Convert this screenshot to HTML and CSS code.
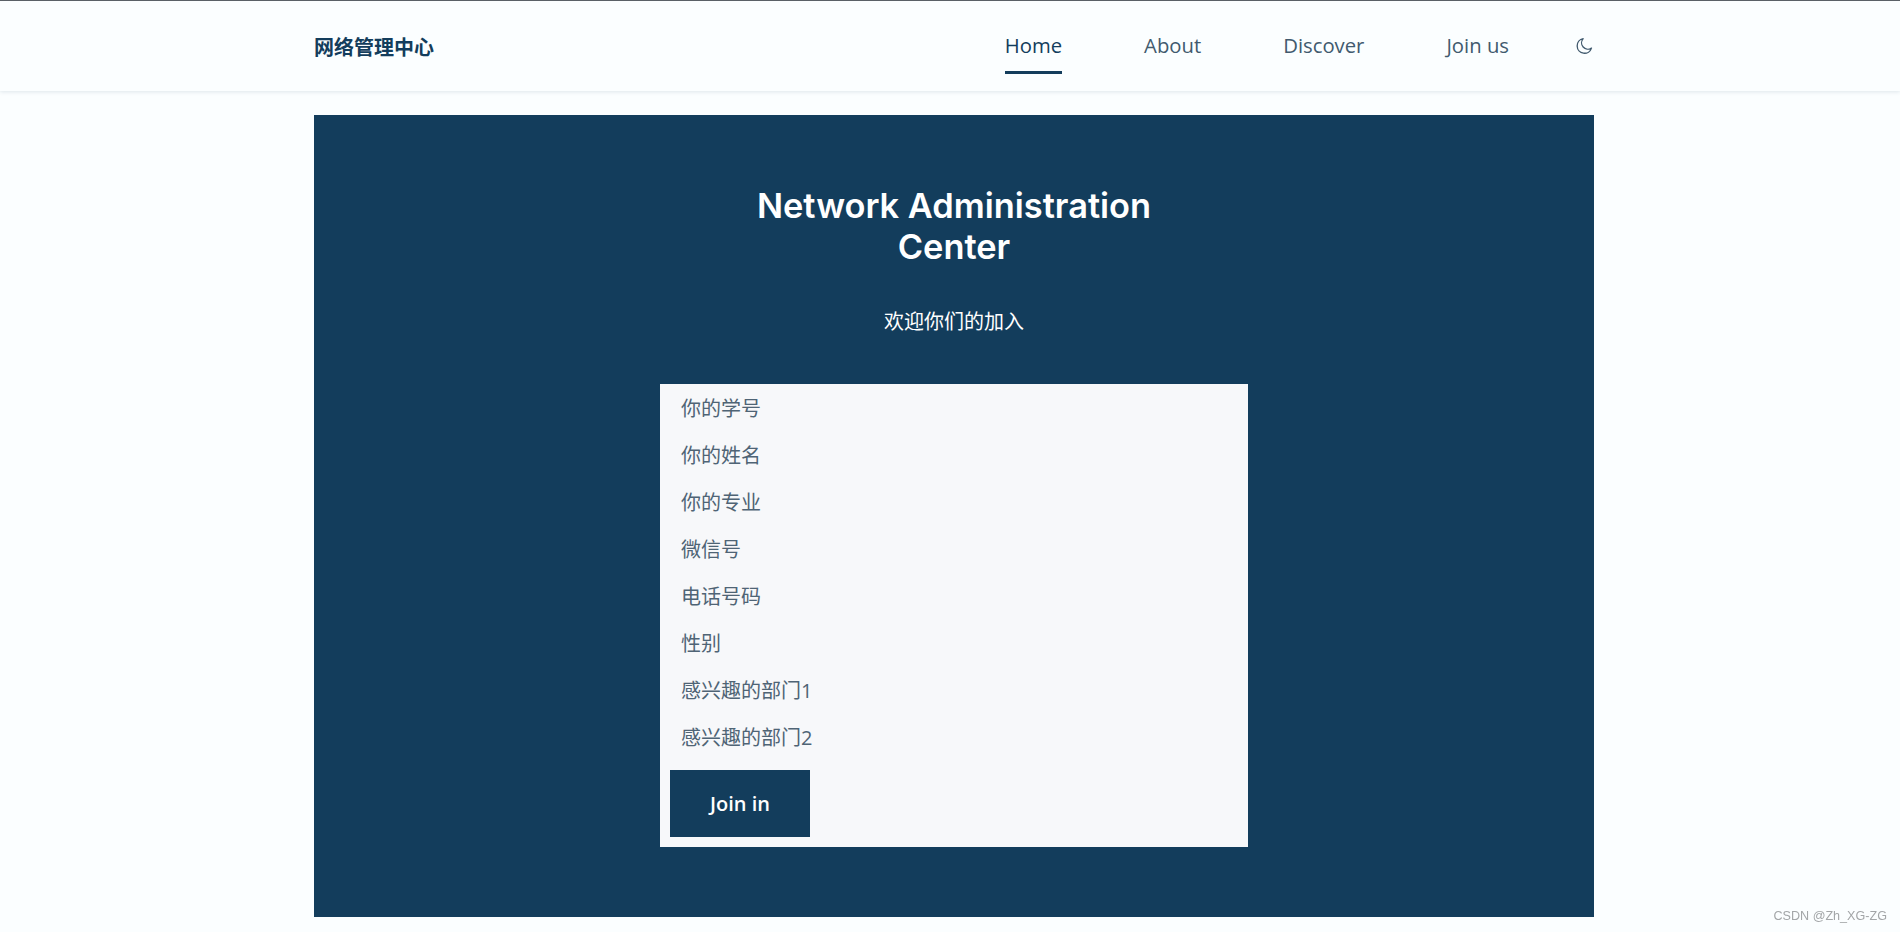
FILE: index.html
```html
<!DOCTYPE html>
<html>
<head>
  <meta charset="utf-8">
  <meta name="viewport" content="width=device-width, initial-scale=1.0">
  <title>网络管理中心</title>
  <link rel="stylesheet" href="styles.css">
</head>
<body>

<header class="header">
  <nav class="nav">
    <a class="logo" href="#">网络管理中心</a>
    <ul class="nav_list">
      <li><a class="nav_link active" href="#">Home</a></li>
      <li><a class="nav_link" href="#">About</a></li>
      <li><a class="nav_link" href="#">Discover</a></li>
      <li><a class="nav_link" href="#">Join us</a></li>
    </ul>
    <svg class="moon" viewBox="0 0 24 24" fill="none" stroke="currentColor" stroke-width="1.6" stroke-linecap="round" stroke-linejoin="round">
      <path d="M11 3.2a8.8 8.8 0 1 0 10 11.3 7.6 7.6 0 0 1-10-11.3z"/>
    </svg>
  </nav>
</header>

<main class="hero">
  <h1 class="title">Network Administration Center</h1>
  <p class="subtitle">欢迎你们的加入</p>

  <form class="join_form">
    <input class="field" type="text" placeholder="你的学号">
    <input class="field" type="text" placeholder="你的姓名">
    <input class="field" type="text" placeholder="你的专业">
    <input class="field" type="text" placeholder="微信号">
    <input class="field" type="text" placeholder="电话号码">
    <input class="field" type="text" placeholder="性别">
    <input class="field" type="text" placeholder="感兴趣的部门1">
    <input class="field" type="text" placeholder="感兴趣的部门2">
    <button class="join_button" type="button">Join in</button>
  </form>
</main>

<div class="watermark">CSDN @Zh_XG-ZG</div>

</body>
</html>
```

FILE: styles.css
```css
* {
  box-sizing: border-box;
}

html {
  height: 100%;
}

body {
  margin: 0;
  height: 100%;
  overflow: hidden;
  background-color: #fbfeff;
  border-top: 1px solid #5a6066;
  font-family: "Open Sans", "Noto Sans CJK SC", sans-serif;
  color: #415a6e;
}

.header {
  height: 90px;
  padding-left: 8px;
  background-color: #fbfeff;
  box-shadow: 0 1px 4px rgba(20, 60, 90, 0.12);
}

.nav {
  width: 1280px;
  height: 100%;
  margin: 0 auto;
  display: flex;
  align-items: center;
  justify-content: space-between;
}

.logo {
  font-size: 20px;
  font-weight: 700;
  color: #133d5c;
  text-decoration: none;
}

.nav_list {
  list-style: none;
  display: flex;
  gap: 82px;
  margin: 0 0 0 auto;
  padding: 0;
}

.nav_link {
  display: block;
  padding: 13px 0 12px;
  border-bottom: 3px solid transparent;
  font-size: 20.3px;
  font-weight: 500;
  color: #415a6e;
  text-decoration: none;
}

.nav_link.active {
  color: #133d5c;
  border-bottom-color: #133d5c;
}

.moon {
  width: 20px;
  height: 20px;
  margin-left: 65px;
  color: #415a6e;
}

.hero {
  width: 1280px;
  height: 802px;
  margin: 24px 0 0 314px;
  padding-top: 70px;
  background-color: #133d5c;
  display: flex;
  flex-direction: column;
  align-items: center;
}

.title {
  width: 420px;
  margin: 0;
  font-family: "Inter", "Lato", sans-serif;
  font-size: 34.4px;
  font-weight: 560;
  line-height: 41px;
  text-align: center;
  color: #ffffff;
}

.subtitle {
  margin: 41px 0 0;
  font-size: 20px;
  line-height: 27px;
  color: #ffffff;
}

.join_form {
  width: 588px;
  height: 463px;
  margin-top: 49px;
  padding: 0 10px;
  background-color: #f7f8fa;
  display: flex;
  flex-direction: column;
  align-items: flex-start;
}

.field {
  width: 100%;
  height: 47px;
  padding: 2px 11px 0;
  border: none;
  outline: none;
  background: transparent;
  font-family: inherit;
  font-size: 20px;
  color: #415a6e;
}

.field::placeholder {
  color: #4f6475;
  opacity: 1;
}

.join_button {
  width: 140px;
  height: 67px;
  margin-top: 10px;
  border: none;
  background-color: #133d5c;
  font-family: inherit;
  font-size: 20px;
  font-weight: 600;
  color: #ffffff;
}

.watermark {
  position: fixed;
  right: 13px;
  bottom: 9px;
  font-family: "Liberation Sans", sans-serif;
  font-size: 12.6px;
  color: #a3a6a8;
}
```
